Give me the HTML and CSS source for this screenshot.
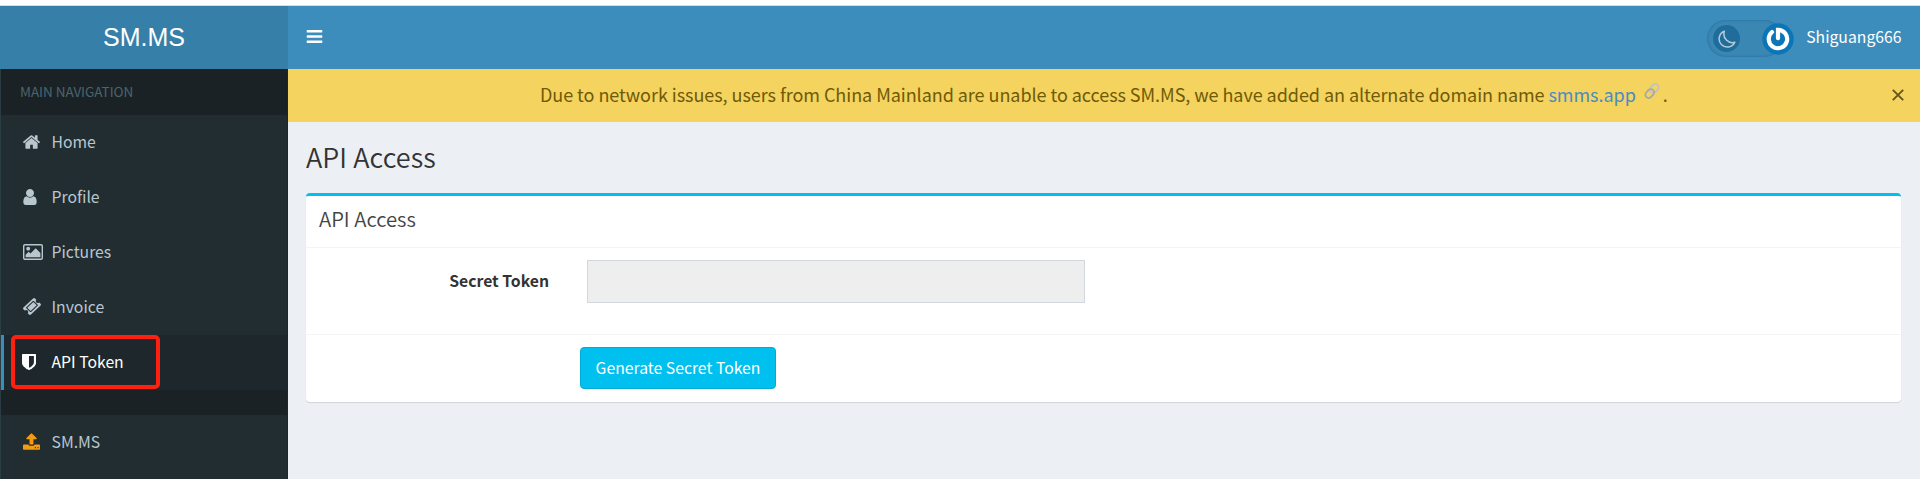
FILE: index.html
```html
<!DOCTYPE html>
<html lang="en">
<head>
<meta charset="utf-8">
<title>API Access - SM.MS</title>
<link rel="stylesheet" href="styles.css">
</head>
<body>
<header class="main-header">
  <a class="logo">SM.MS</a>
  <nav class="navbar">
    <svg class="bars" viewBox="128 256 1536 1280"><path d="M1664 1344v128q0 26-19 45t-45 19h-1408q-26 0-45-19t-19-45v-128q0-26 19-45t45-19h1408q26 0 45 19t19 45zm0-512v128q0 26-19 45t-45 19h-1408q-26 0-45-19t-19-45v-128q0-26 19-45t45-19h1408q26 0 45 19t19 45zm0-512v128q0 26-19 45t-45 19h-1408q-26 0-45-19t-19-45v-128q0-26 19-45t45-19h1408q26 0 45 19t19 45z"/></svg>
    <div class="user-area">
      <div class="theme-toggle"><span class="knob"><svg class="moon" viewBox="0 0 18 18"><path d="M6.3 1.2A8.2 8.2 0 1 0 16.8 12.2C10.5 14.2 4.200 8 6.300 1.200Z"/></svg></span></div>
      <svg class="avatar" viewBox="0 0 32 32"><circle class="avatar-bg" cx="16" cy="16" r="15.700"/><path class="avatar-mark" d="M10 9A9.200 9.200 0 1 0 16 6.800V15.200"/></svg>
      <span class="username">Shiguang666</span>
    </div>
  </nav>
</header>
<div class="wrapper">
  <aside class="sidebar">
    <div class="menu-header">MAIN NAVIGATION</div>
    <a class="item"><span class="icon"><svg width="17" height="14" viewBox="90 246 1612 1290"><path d="M1472 992v480q0 26-19 45t-45 19h-384v-384h-256v384h-384q-26 0-45-19t-19-45v-480q0-1 .5-3t.5-3l575-474 575 474q1 2 1 6zm223-69l-62 74q-8 9-21 11h-3q-13 0-21-7l-692-577-692 577q-12 8-24 7-13-2-21-11l-62-74q-8-10-7-23.500t11-21.500l719-599q32-26 76-26t76 26l244 204v-195q0-14 9-23t23-9h192q14 0 23 9t9 23v408l219 182q10 8 11 21.500t-7 23.500z"/></svg></span><span class="label">Home</span></a>
    <a class="item"><span class="icon"><svg width="14" height="16" viewBox="256 128 1280 1536"><path d="M1536 1399q0 109-62.500 187t-150.500 78h-854q-88 0-150.500-78t-62.500-187q0-85 8.500-160.500t31.500-152 58.500-131 94-89 134.500-34.500q131 128 313 128t313-128q76 0 134.500 34.500t94 89 58.500 131 31.500 152 8.500 160.500zm-256-887q0 159-112.500 271.500t-271.500 112.500-271.500-112.500-112.500-271.500 112.500-271.500 271.500-112.500 271.500 112.500 112.500 271.500z"/></svg></span><span class="label">Profile</span></a>
    <a class="item"><span class="icon"><svg width="20" height="16" viewBox="0 0 20 16"><rect class="frame" x=".7" y=".7" width="18.600" height="14.600" rx="1.300"/><circle cx="5.200" cy="4.700" r="1.900"/><path d="M2.600 13.300V10.800L5.700 7.800 7.500 9.500 12.700 4.300 17.400 9V13.300Z"/></svg></span><span class="label">Pictures</span></a>
    <a class="item"><span class="icon"><svg width="18" height="17" viewBox="52 53 1688 1688" preserveAspectRatio="none"><path fill-rule="evenodd" d="M1024 452l316 316-572 572-316-316zm-211 979l618-618q19-19 19-45t-19-45l-362-362q-18-18-45-18t-45 18l-618 618q-19 19-19 45t19 45l362 362q18 18 45 18t45-18zm889-637l-907 908q-37 37-90.500 37t-90.500-37l-126-125q56-56 56-136t-56-136-136-56-136 56l-125-126q-37-37-37-90.500t37-90.500l907-906q37-37 90.500-37t90.500 37l125 125q-56 56-56 136t56 136 136 56 136-56l126 125q37 37 37 90.500t-37 90.500z"/></svg></span><span class="label">Invoice</span></a>
    <a class="item active"><span class="icon"><svg width="14" height="16" viewBox="256 128 1280 1536" preserveAspectRatio="none"><path d="M1344 960v-640h-448v1137q119-63 213-137 235-184 235-360zm192-768v768q0 86-33.500 170.500t-83 150-118 127.500-126.500 103-121 77.500-89.500 49.500-42.500 20q-12 6-26 6t-26-6q-16-7-42.500-20t-89.500-49.500-121-77.500-126.500-103-118-127.500-83-150-33.500-170.500v-768q0-26 19-45t45-19h1152q26 0 45 19t19 45z"/></svg></span><span class="label">API Token</span><span class="highlight"></span></a>
    <div class="spacer"></div>
    <a class="item upload"><span class="icon"><svg width="17" height="17" viewBox="64 64 1664 1600"><path d="M1344 1472q0-26-19-45t-45-19-45 19-19 45 19 45 45 19 45-19 19-45zm256 0q0-26-19-45t-45-19-45 19-19 45 19 45 45 19 45-19 19-45zm128-224v320q0 40-28 68t-68 28h-1472q-40 0-68-28t-28-68v-320q0-40 28-68t68-28h427q21 56 70.500 92t110.500 36h256q61 0 110.500-36t70.500-92h427q40 0 68 28t28 68zm-325-648q-17 40-59 40h-256v448q0 26-19 45t-45 19h-256q-26 0-45-19t-19-45v-448h-256q-42 0-59-40-17-39 14-69l448-448q18-19 45-19t45 19l448 448q31 30 14 69z"/></svg></span><span class="label">SM.MS</span></a>
  </aside>
  <main class="content-wrapper">
    <div class="notice">
      <p class="notice-text">Due to network issues, users from China Mainland are unable to access SM.MS, we have added an alternate domain name <a class="link">smms.app</a></p>
      <svg class="chain" viewBox="0 0 16 16"><g transform="rotate(-48 8 8)"><rect class="light" x="6.500" y="4.700" width="9.800" height="6.600" rx="3.300"/><rect x="-.3" y="4.700" width="9.800" height="6.600" rx="3.300"/></g></svg>
      <span class="dot">.</span>
      <svg class="close" viewBox="0 0 12 12"><path d="M.8.8 11.200 11.200M11.200.8.8 11.200"/></svg>
    </div>
    <section class="content">
      <h1 class="page-title">API Access</h1>
      <div class="box">
        <div class="box-header"><h3 class="box-title">API Access</h3></div>
        <div class="box-body"><label class="field-label" for="token">Secret Token</label><input class="field" id="token" type="text" disabled></div>
        <div class="box-footer"><button class="btn" type="button">Generate Secret Token</button></div>
      </div>
    </section>
  </main>
</div>
</body>
</html>
```
FILE: styles.css
```css
* { box-sizing: border-box; }
body {
  margin: 0;
  padding-top: 5px;
  height: 479px;
  overflow: hidden;
  background: #fff;
  font-family: "Noto Sans CJK SC", "Open Sans", sans-serif;
  font-size: 15.75px;
  color: #333;
}
svg { display: block; flex: none; }
.main-header { display: flex; height: 64px; border-top: 1px solid #d4dfe2; background: #3c8dbc; }
.logo {
  width: 288px;
  text-align: center;
  background: #367fa9;
  color: #fff;
  font: 25px/63px "Liberation Sans", Arial, sans-serif;
}
.navbar { flex: 1; display: flex; align-items: flex-start; justify-content: space-between; padding: 0 18.500px 0 18px; }
.bars { width: 17px; height: 13px; margin-top: 24px; fill: #fff; }
.user-area { display: flex; align-items: center; margin-top: 14px; height: 37px; }
.theme-toggle {
  width: 76px;
  height: 37px;
  padding: 5px 6px;
  border-radius: 19px;
  background: #3a87b4;
  box-shadow: inset 0 0 3px rgba(0, 50, 90, .35);
}
.knob { display: flex; align-items: center; justify-content: center; width: 27px; height: 27px; border-radius: 50%; background: #206d9b; }
.moon { width: 18px; height: 18px; fill: none; stroke: #b4cad8; stroke-width: 1.5; stroke-linejoin: round; }
.avatar { width: 32px; height: 32px; margin: 0 12px 0 -21px; }
.avatar-bg { fill: #0a76b8; }
.avatar-mark { fill: none; stroke: #fff; stroke-width: 4.200; stroke-linecap: round; }
.username { line-height: 30px; padding-bottom: 3px; color: #fff; }

.wrapper { display: flex; height: 410px; }
.sidebar { width: 288px; background: #222d32; border-left: 1px solid #2c3c43; border-right: 1px solid #1d272b; }
.menu-header { height: 46px; padding-left: 19px; line-height: 44px; font-size: 13.500px; letter-spacing: -.04px; color: #4b646f; background: #1a2226; }
.item { position: relative; display: flex; align-items: center; height: 55px; padding: 0 0 2px 22px; color: #b8c7ce; }
.icon { width: 28.500px; fill: currentColor; }
.frame { fill: none; stroke: currentColor; stroke-width: 1.400; }
.active { padding-left: 18px; border-left: 3px solid #3c8dbc; background: #1e282c; color: #fff; }
.active .icon { width: 29.500px; }
.highlight { position: absolute; left: 7px; top: 0; width: 149px; height: 54px; border: 4px solid #ff2010; border-radius: 5px; }
.spacer { height: 25px; background: #1a2226; }
.upload .icon { color: #f39c12; }

.content-wrapper { flex: 1; background: #ecf0f5; }
.notice { position: relative; display: flex; height: 53px; padding-left: 252px; background: #f4d35e; color: #6f5a08; font-size: 18px; line-height: 50px; white-space: nowrap; }
.notice-text { margin: 0; letter-spacing: -.05px; }
.link { color: #4a8cc4; }
.chain { width: 16px; height: 16px; margin: 14px 3px 0 8px; fill: none; stroke: #a9a9a4; stroke-width: 1.800; overflow: visible; }
.light { stroke: #c4c3bd; }
.close { position: absolute; right: 16px; top: 20px; width: 12px; height: 12px; stroke: #65551b; stroke-width: 1.900; }
.content { padding: 17px 19px 0 18px; }
.page-title { margin: 0; height: 54px; font-size: 27px; font-weight: 350; line-height: 35px; letter-spacing: .08px; }
.box { height: 209px; border-top: 3px solid #00c0ef; border-radius: 4px; background: #fff; box-shadow: 0 1px 1px rgba(0, 0, 0, .12); }
.box-header { height: 52px; padding: 11px 13px; border-bottom: 1px solid #f4f4f4; }
.box-title { margin: 0; font-size: 20.250px; font-weight: 350; line-height: 23px; color: #444; }
.box-body { display: flex; height: 86px; padding-top: 12px; }
.field-label { width: 243px; margin-right: 38px; text-align: right; font-weight: 700; line-height: 41px; }
.field { width: 498px; height: 43px; border: 1px solid #d2d6de; background: #eee; }
.box-footer { padding: 12px 0 0 274px; border-top: 1px solid #f4f4f4; }
.btn { display: block; width: 196px; height: 42px; padding: 0 0 2px; border: 1px solid #00acd6; border-radius: 4px; background: #00c0ef; color: #fff; font: inherit; }
```
